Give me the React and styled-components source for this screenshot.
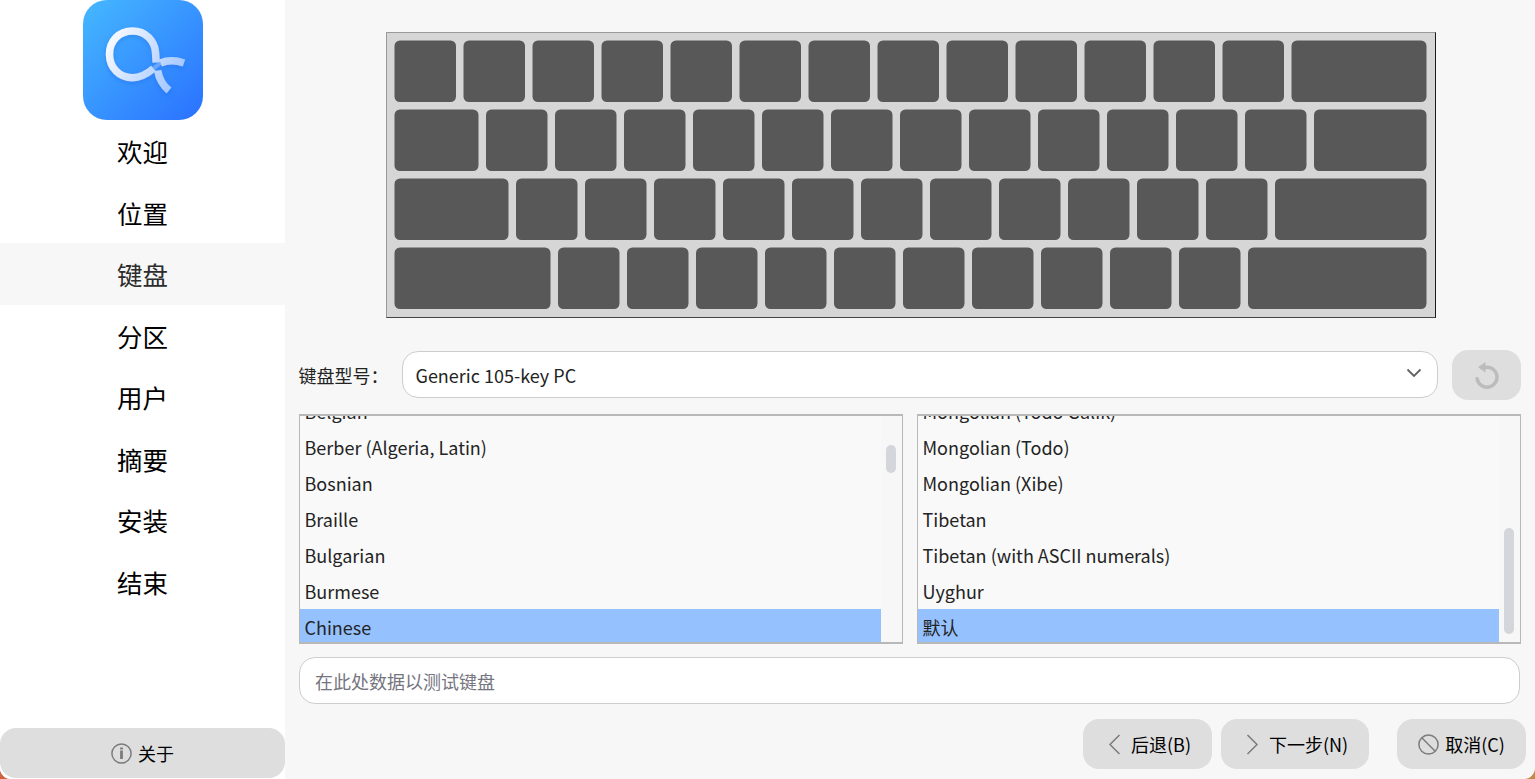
import React from "react";
import styled, { createGlobalStyle } from "styled-components";

const GlobalStyle = createGlobalStyle`
  * { box-sizing: border-box; }
  body {
    margin: 0;
    overflow: hidden;
    font-family: "Noto Sans CJK SC", "Noto Sans", sans-serif;
    font-size: 18px;
    color: #232323;
  }
  button, input { font: inherit; }
`;

const Desktop = styled.div`
  width: 1535px;
  height: 779px;
  background: linear-gradient(90deg, #d0633f 0 50%, #c08a48 50%);
`;

const Window = styled.div`
  display: flex;
  height: 100%;
  overflow: hidden;
  background: #f7f7f7;
  border-radius: 0 0 11px 11px;
`;

const Sidebar = styled.aside`
  flex: 0 0 285px;
  display: flex;
  flex-direction: column;
  align-items: center;
  background: #fff;
`;

const Logo = styled.svg`
  display: block;
  flex: none;
`;

const Steps = styled.nav`
  width: 100%;
`;

const Step = styled.div`
  height: 61.5px;
  display: flex;
  align-items: center;
  justify-content: center;
  padding-top: 1px;
  font-size: 25.5px;
  line-height: 38px;
  color: ${(p) => (p.$active ? "#2d2d2d" : "#000")};
  background: ${(p) => (p.$active ? "#f7f7f7" : "transparent")};
`;

const Button = styled.button`
  flex: none;
  display: flex;
  align-items: center;
  justify-content: center;
  gap: 6px;
  width: ${(p) => p.$width}px;
  height: 50px;
  padding: 0;
  border: 0;
  border-radius: 16px;
  background: #dedede;
  color: #000;
  line-height: 26px;
`;

const AboutButton = styled(Button)`
  margin-top: auto;
  margin-bottom: 1px;
`;

const Main = styled.main`
  flex: 1;
  min-width: 0;
  display: flex;
  flex-direction: column;
  padding: 32px 14px 10px;
`;

const Keyboard = styled.div`
  width: 1050px;
  height: 286px;
  margin-left: 87px;
  background: #d6d6d6;
  border: 1px solid;
  border-color: #999 #1c1c1c #444 #999;
`;

const KeyDrawing = styled.svg`
  display: block;
  fill: #585858;
`;

const ModelRow = styled.div`
  display: flex;
  align-items: flex-start;
  height: 51px;
  margin-top: 32px;
`;

const Label = styled.label`
  width: 103.5px;
  margin-left: -0.5px;
  padding-top: 12px;
  line-height: 27px;
  white-space: nowrap;
`;

const Select = styled.div`
  width: 1036px;
  height: 47px;
  margin: 1px 14px 0 0;
  padding: 0 15px 0 12.5px;
  display: flex;
  align-items: center;
  justify-content: space-between;
  border: 1px solid #cdcdcd;
  border-radius: 16px;
  background: #fff;
`;

const SelectValue = styled.span`
  line-height: 26px;
  padding-top: 1px;
`;

const Lists = styled.div`
  display: flex;
  gap: 14px;
  margin-top: 13px;
`;

const ListBox = styled.div`
  width: 604px;
  height: 230px;
  display: flex;
  overflow: hidden;
  border: 1px solid #b8b8b8;
  border-width: 2px 1px;
  background: #f9f9f9;
`;

const Items = styled.div`
  flex: 1;
  margin-top: -23px;
`;

const Item = styled.div`
  height: 36px;
  padding: 1px 4.5px 0;
  line-height: 34px;
  white-space: nowrap;
  background: ${(p) => (p.$selected ? "#96c1ff" : "transparent")};
`;

const ScrollTrack = styled.div`
  width: 21px;
  padding-left: 5px;
  padding-top: ${(p) => p.$offset}px;
  background: #f7f7f7;
`;

const ScrollThumb = styled.div`
  width: 10px;
  height: ${(p) => p.$height}px;
  border-radius: 5px;
  background: #d5d5dc;
`;

const TestInput = styled.input`
  width: 1221px;
  height: 47px;
  margin-top: 13px;
  padding: 0 15px;
  border: 1px solid #cdcdcd;
  border-radius: 16px;
  background: #fff;
  outline: 0;
  &::placeholder { color: #757580; opacity: 1; }
`;

const Footer = styled.footer`
  display: flex;
  justify-content: flex-end;
  margin-top: 15px;
  margin-right: -5px;
  gap: 9px;
`;

const CancelButton = styled(Button)`
  margin-left: 19px;
`;

const Icon = styled.svg`
  flex: none;
  display: block;
  fill: none;
  stroke: ${(p) => p.$color ?? "#7c7c7c"};
  stroke-width: ${(p) => p.$stroke ?? 1.5};
`;

const SelectArrow = styled(Icon)`
  margin-bottom: 4px;
`;

const steps = ["欢迎", "位置", "键盘", "分区", "用户", "摘要", "安装", "结束"];

const KEY = 61.5;
const GAP = 7.5;
const ROW_END = 1039.5;

const keyRows = [
  { first: 61.5, middle: 12 },
  { first: 84, middle: 12 },
  { first: 114, middle: 11 },
  { first: 156, middle: 10 },
];

const layouts = ["Belgian", "Berber (Algeria, Latin)", "Bosnian", "Braille", "Bulgarian", "Burmese", "Chinese"];
const variants = ["Mongolian (Todo Galik)", "Mongolian (Todo)", "Mongolian (Xibe)", "Tibetan", "Tibetan (with ASCII numerals)", "Uyghur", "默认"];

function AppLogo() {
  return (
    <Logo width="120" height="120" viewBox="0 0 120 120">
      <defs>
        <linearGradient id="tile" x1="0" y1="0" x2="1" y2="1">
          <stop offset="0" stopColor="#45b8ff" />
          <stop offset="1" stopColor="#2a71ff" />
        </linearGradient>
        <linearGradient id="ribbon" gradientUnits="userSpaceOnUse" x1="24" y1="35" x2="100" y2="80">
          <stop offset="0" stopColor="#fbfcff" />
          <stop offset="1" stopColor="#9fc4ff" />
        </linearGradient>
        <filter id="shade" x="-20%" y="-20%" width="140%" height="140%">
          <feDropShadow dx="0" dy="2" stdDeviation="2" floodColor="#1763d8" floodOpacity="0.35" />
        </filter>
      </defs>
      <rect width="120" height="120" rx="24" fill="url(#tile)" />
      <g fill="none" stroke="url(#ribbon)" strokeWidth="7.5" filter="url(#shade)">
        <path d="M70.5 68.5 C64 74 57 77.7 49.5 77.7 C36 77.7 26.5 67.5 26.5 54.3 C26.5 41 36 31 49.5 31 C63 31 71.5 41 72.5 52 L73.2 62.5" />
        <path d="M77.5 63 C84 60.3 92 60 101 63" />
        <path d="M74.7 70.5 C76 78.5 80 85.5 86 90.5" />
        <path d="M70.5 68.5 L77.5 63" strokeWidth="4" opacity="0.35" />
      </g>
    </Logo>
  );
}

function Keys() {
  return (
    <KeyDrawing width="1048" height="284" viewBox="0 0 1048 284">
      {keyRows.map((row, r) => {
        const widths = [row.first, ...Array(row.middle).fill(KEY)];
        const used = widths.reduce((sum, w) => sum + w + GAP, GAP);
        widths.push(ROW_END - used);
        let x = GAP;
        return widths.map((w, i) => {
          const left = x;
          x += w + GAP;
          return (
            <rect key={`${r}-${i}`} x={left} y={GAP + r * (KEY + GAP)} width={w} height={KEY} rx="5.5" />
          );
        });
      })}
    </KeyDrawing>
  );
}

function ListPanel({ items, selected, offset, thumb }) {
  return (
    <ListBox>
      <Items>
        {items.map((item) => (
          <Item key={item} $selected={item === selected}>{item}</Item>
        ))}
      </Items>
      <ScrollTrack $offset={offset}>
        <ScrollThumb $height={thumb} />
      </ScrollTrack>
    </ListBox>
  );
}

export default function App() {
  return (
    <Desktop>
      <GlobalStyle />
      <Window>
        <Sidebar>
          <AppLogo />
          <Steps>
            {steps.map((step) => (
              <Step key={step} $active={step === "键盘"}>{step}</Step>
            ))}
          </Steps>
          <AboutButton $width={285}>
            <Icon width="21" height="21" viewBox="0 0 21 21">
              <circle cx="10.5" cy="10.5" r="9.6" />
              <path d="M10.5 4.5v2M10.5 7.5v8.5" strokeWidth="2.8" />
            </Icon>
            关于
          </AboutButton>
        </Sidebar>
        <Main>
          <Keyboard>
            <Keys />
          </Keyboard>
          <ModelRow>
            <Label>键盘型号：</Label>
            <Select>
              <SelectValue>Generic 105-key PC</SelectValue>
              <SelectArrow width="16" height="10" viewBox="0 0 16 10" $color="#626262" $stroke={1.8}>
                <path d="M1.5 1.5 8 8l6.5-6.5" />
              </SelectArrow>
            </Select>
            <Button $width={69} aria-label="重置">
              <Icon width="26" height="28" viewBox="0 0 26 28" $color="#bcbcbc" $stroke={3.4}>
                <path d="M3 16.2a10 10 0 1 0 10-10H9" />
                <path d="M11.5 1v10.5L4 6.2z" fill="#bcbcbc" stroke="none" />
              </Icon>
            </Button>
          </ModelRow>
          <Lists>
            <ListPanel items={layouts} selected="Chinese" offset={29} thumb={28} />
            <ListPanel items={variants} selected="默认" offset={112} thumb={106} />
          </Lists>
          <TestInput placeholder="在此处数据以测试键盘" />
          <Footer>
            <Button $width={129}>
              <Icon width="21" height="21" viewBox="0 0 21 21">
                <path d="M15.5 1 6 10.5l9.5 9.5" />
              </Icon>
              后退(B)
            </Button>
            <Button $width={148}>
              <Icon width="21" height="21" viewBox="0 0 21 21">
                <path d="M5.5 1 15 10.5 5.5 20" />
              </Icon>
              下一步(N)
            </Button>
            <CancelButton $width={129}>
              <Icon width="21" height="21" viewBox="0 0 21 21">
                <circle cx="10.5" cy="10.5" r="9.6" />
                <path d="m3.8 3.8 13.4 13.4" />
              </Icon>
              取消(C)
            </CancelButton>
          </Footer>
        </Main>
      </Window>
    </Desktop>
  );
}
